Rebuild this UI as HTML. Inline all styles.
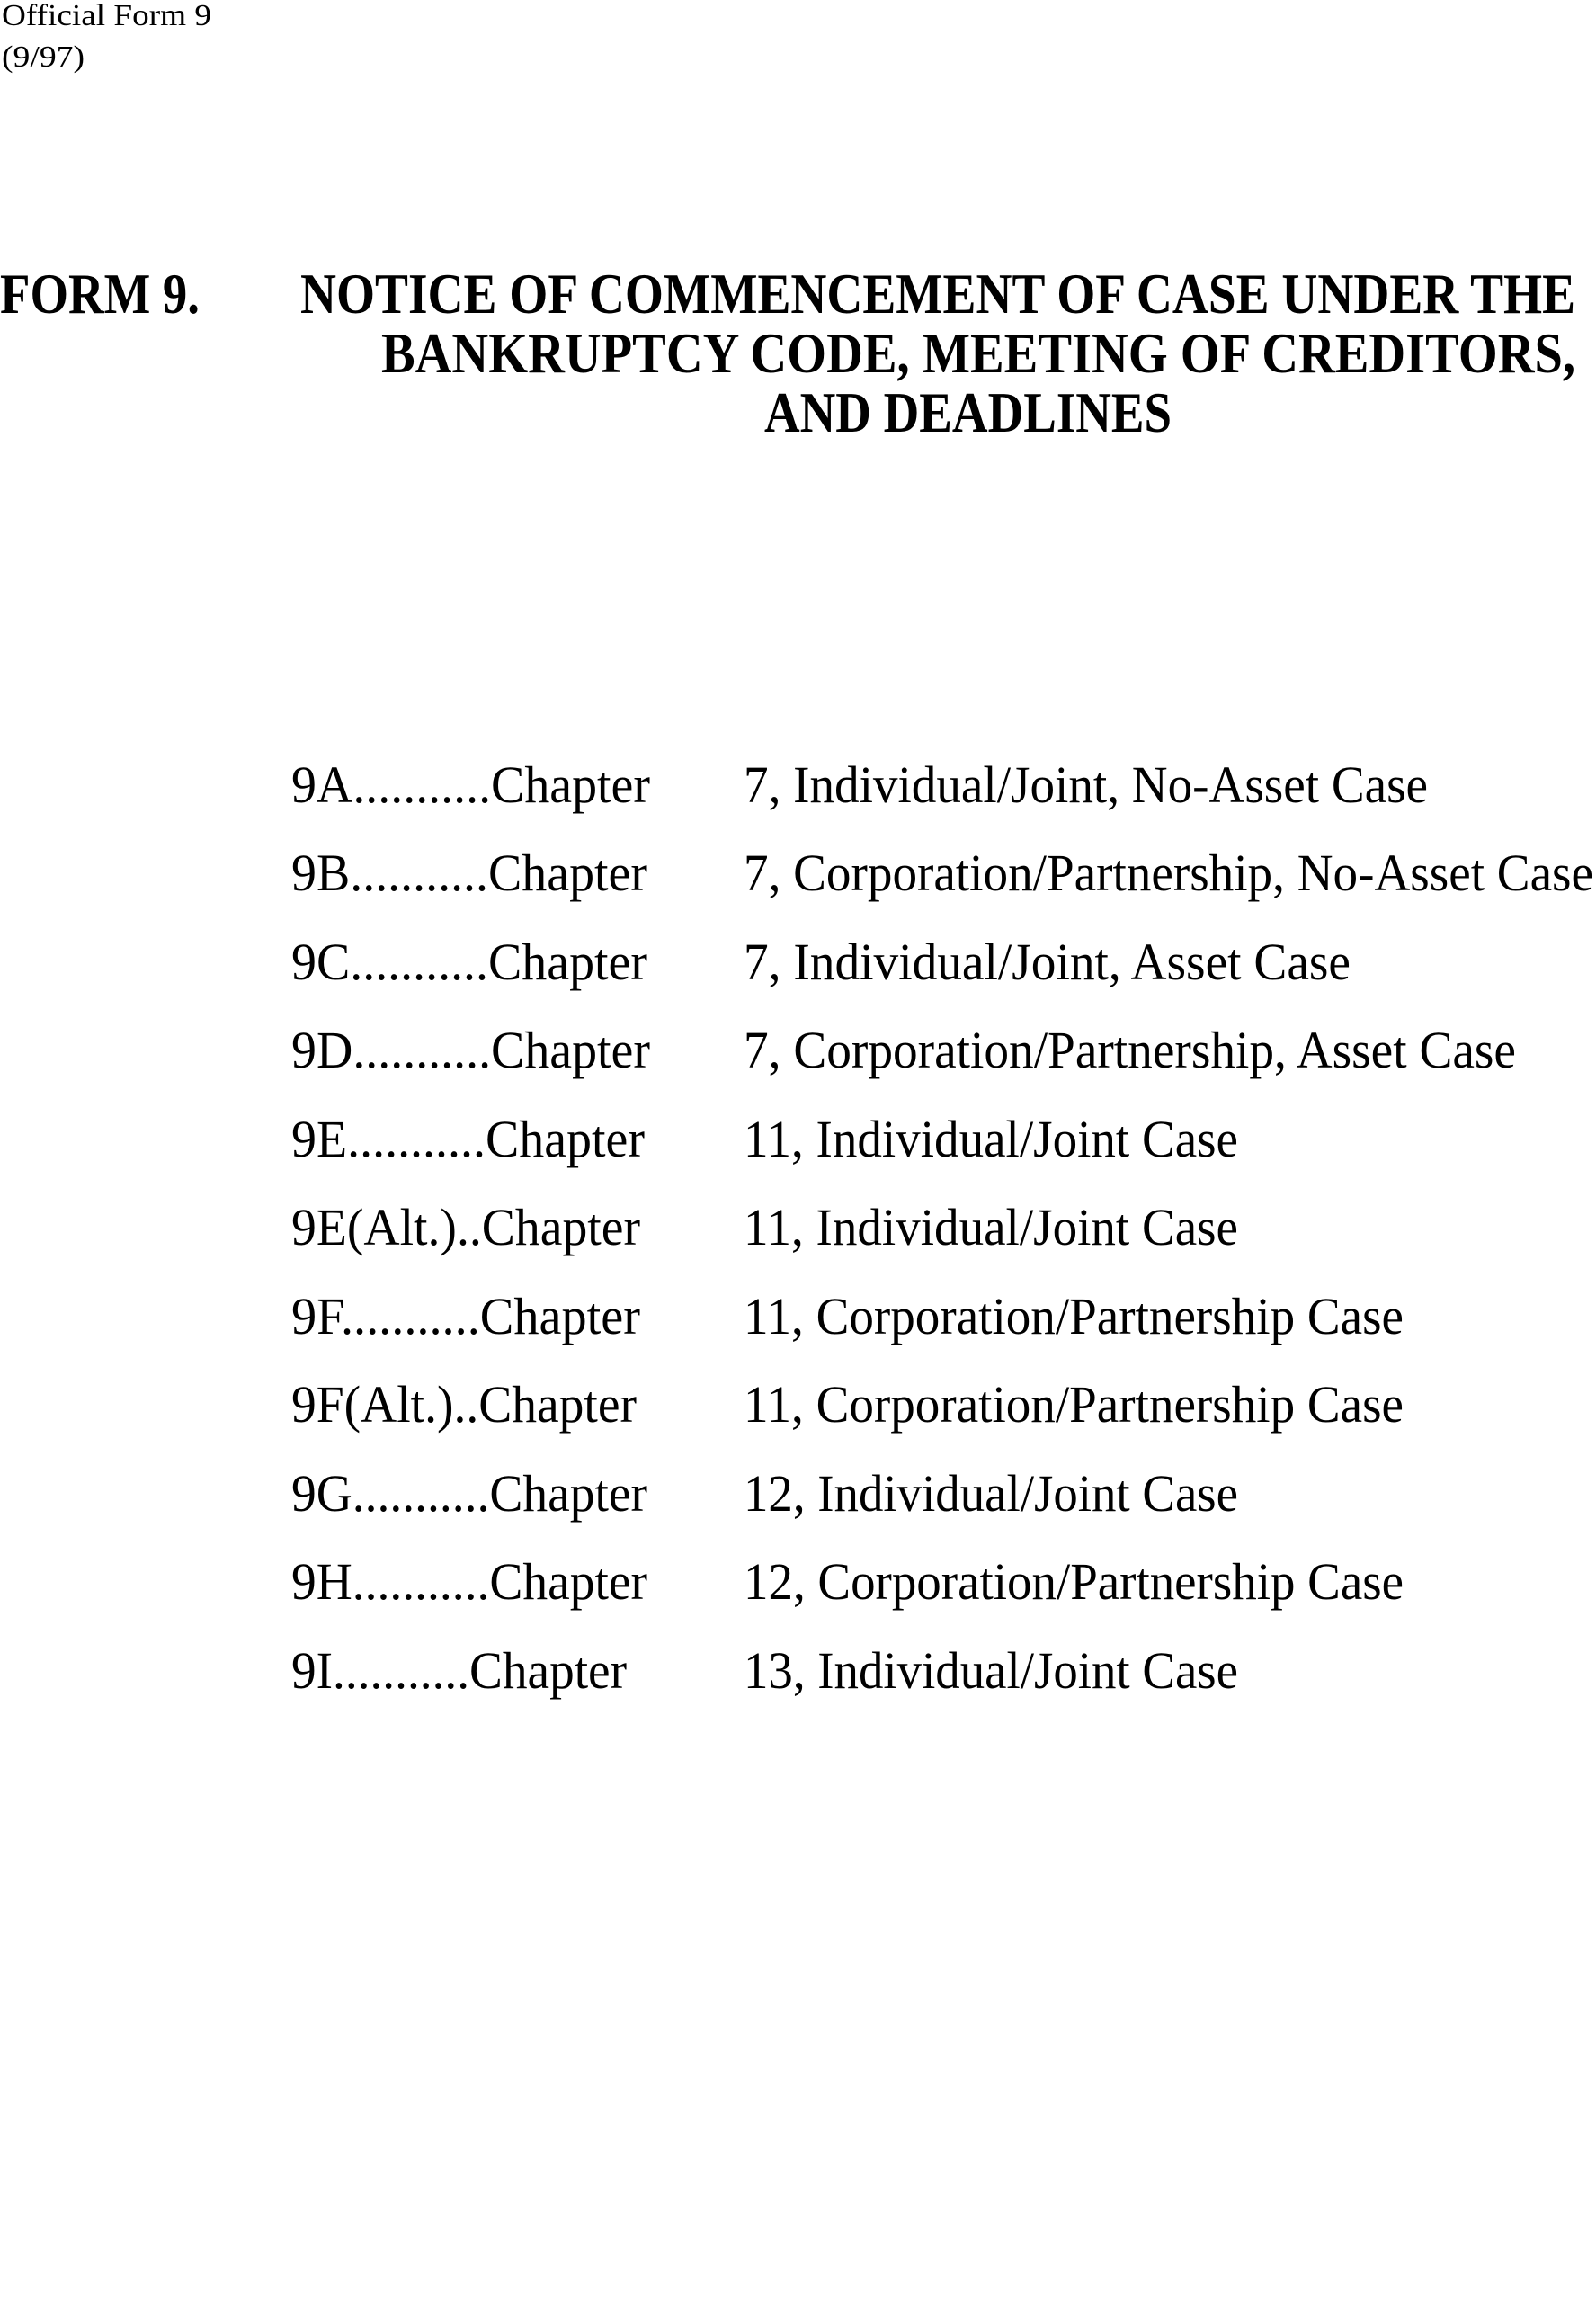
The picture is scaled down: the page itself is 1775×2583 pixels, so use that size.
<!DOCTYPE html>
<html><head><meta charset="utf-8"><style>
html,body{margin:0;padding:0;background:#fff;}
svg{display:block;}
text{font-family:"Liberation Serif","Times New Roman",serif;fill:#000;}
.b{font-weight:bold;font-size:64px;}
.r{font-size:58px;}
.s{font-size:34px;}
</style></head><body>
<svg width="1775" height="2583" viewBox="0 0 1775 2583" xmlns="http://www.w3.org/2000/svg">
<text class="s" x="2" y="28" textLength="233" lengthAdjust="spacingAndGlyphs">Official Form 9</text>
<text class="s" x="2" y="74" textLength="92" lengthAdjust="spacingAndGlyphs">(9/97)</text>

<text class="b" x="0" y="348" textLength="222" lengthAdjust="spacingAndGlyphs">FORM 9.</text>
<text class="b" x="334" y="348" textLength="1418" lengthAdjust="spacingAndGlyphs">NOTICE OF COMMENCEMENT OF CASE UNDER THE</text>
<text class="b" x="424" y="414" textLength="1328" lengthAdjust="spacingAndGlyphs">BANKRUPTCY CODE, MEETING OF CREDITORS,</text>
<text class="b" x="850" y="480" textLength="453" lengthAdjust="spacingAndGlyphs">AND DEADLINES</text>

<g transform="translate(0,3)">
<text class="r" x="324" y="889" textLength="399" lengthAdjust="spacingAndGlyphs">9A...........Chapter</text>
<text class="r" x="827" y="889" textLength="761" lengthAdjust="spacingAndGlyphs">7, Individual/Joint, No-Asset Case</text>

<text class="r" x="324" y="987" textLength="396" lengthAdjust="spacingAndGlyphs">9B...........Chapter</text>
<text class="r" x="827" y="987" textLength="945" lengthAdjust="spacingAndGlyphs">7, Corporation/Partnership, No-Asset Case</text>

<text class="r" x="324" y="1086" textLength="396" lengthAdjust="spacingAndGlyphs">9C...........Chapter</text>
<text class="r" x="827" y="1086" textLength="675" lengthAdjust="spacingAndGlyphs">7, Individual/Joint, Asset Case</text>

<text class="r" x="324" y="1184" textLength="399" lengthAdjust="spacingAndGlyphs">9D...........Chapter</text>
<text class="r" x="827" y="1184" textLength="859" lengthAdjust="spacingAndGlyphs">7, Corporation/Partnership, Asset Case</text>

<text class="r" x="324" y="1283" textLength="393" lengthAdjust="spacingAndGlyphs">9E...........Chapter</text>
<text class="r" x="827" y="1283" textLength="550" lengthAdjust="spacingAndGlyphs">11, Individual/Joint Case</text>

<text class="r" x="324" y="1381" textLength="388" lengthAdjust="spacingAndGlyphs">9E(Alt.)..Chapter</text>
<text class="r" x="827" y="1381" textLength="550" lengthAdjust="spacingAndGlyphs">11, Individual/Joint Case</text>

<text class="r" x="324" y="1480" textLength="388" lengthAdjust="spacingAndGlyphs">9F...........Chapter</text>
<text class="r" x="827" y="1480" textLength="734" lengthAdjust="spacingAndGlyphs">11, Corporation/Partnership Case</text>

<text class="r" x="324" y="1578" textLength="384" lengthAdjust="spacingAndGlyphs">9F(Alt.)..Chapter</text>
<text class="r" x="827" y="1578" textLength="734" lengthAdjust="spacingAndGlyphs">11, Corporation/Partnership Case</text>

<text class="r" x="324" y="1677" textLength="396" lengthAdjust="spacingAndGlyphs">9G...........Chapter</text>
<text class="r" x="827" y="1677" textLength="550" lengthAdjust="spacingAndGlyphs">12, Individual/Joint Case</text>

<text class="r" x="324" y="1775" textLength="396" lengthAdjust="spacingAndGlyphs">9H...........Chapter</text>
<text class="r" x="827" y="1775" textLength="734" lengthAdjust="spacingAndGlyphs">12, Corporation/Partnership Case</text>

<text class="r" x="324" y="1874" textLength="373" lengthAdjust="spacingAndGlyphs">9I...........Chapter</text>
<text class="r" x="827" y="1874" textLength="550" lengthAdjust="spacingAndGlyphs">13, Individual/Joint Case</text>
</g>
</svg>
</body></html>
